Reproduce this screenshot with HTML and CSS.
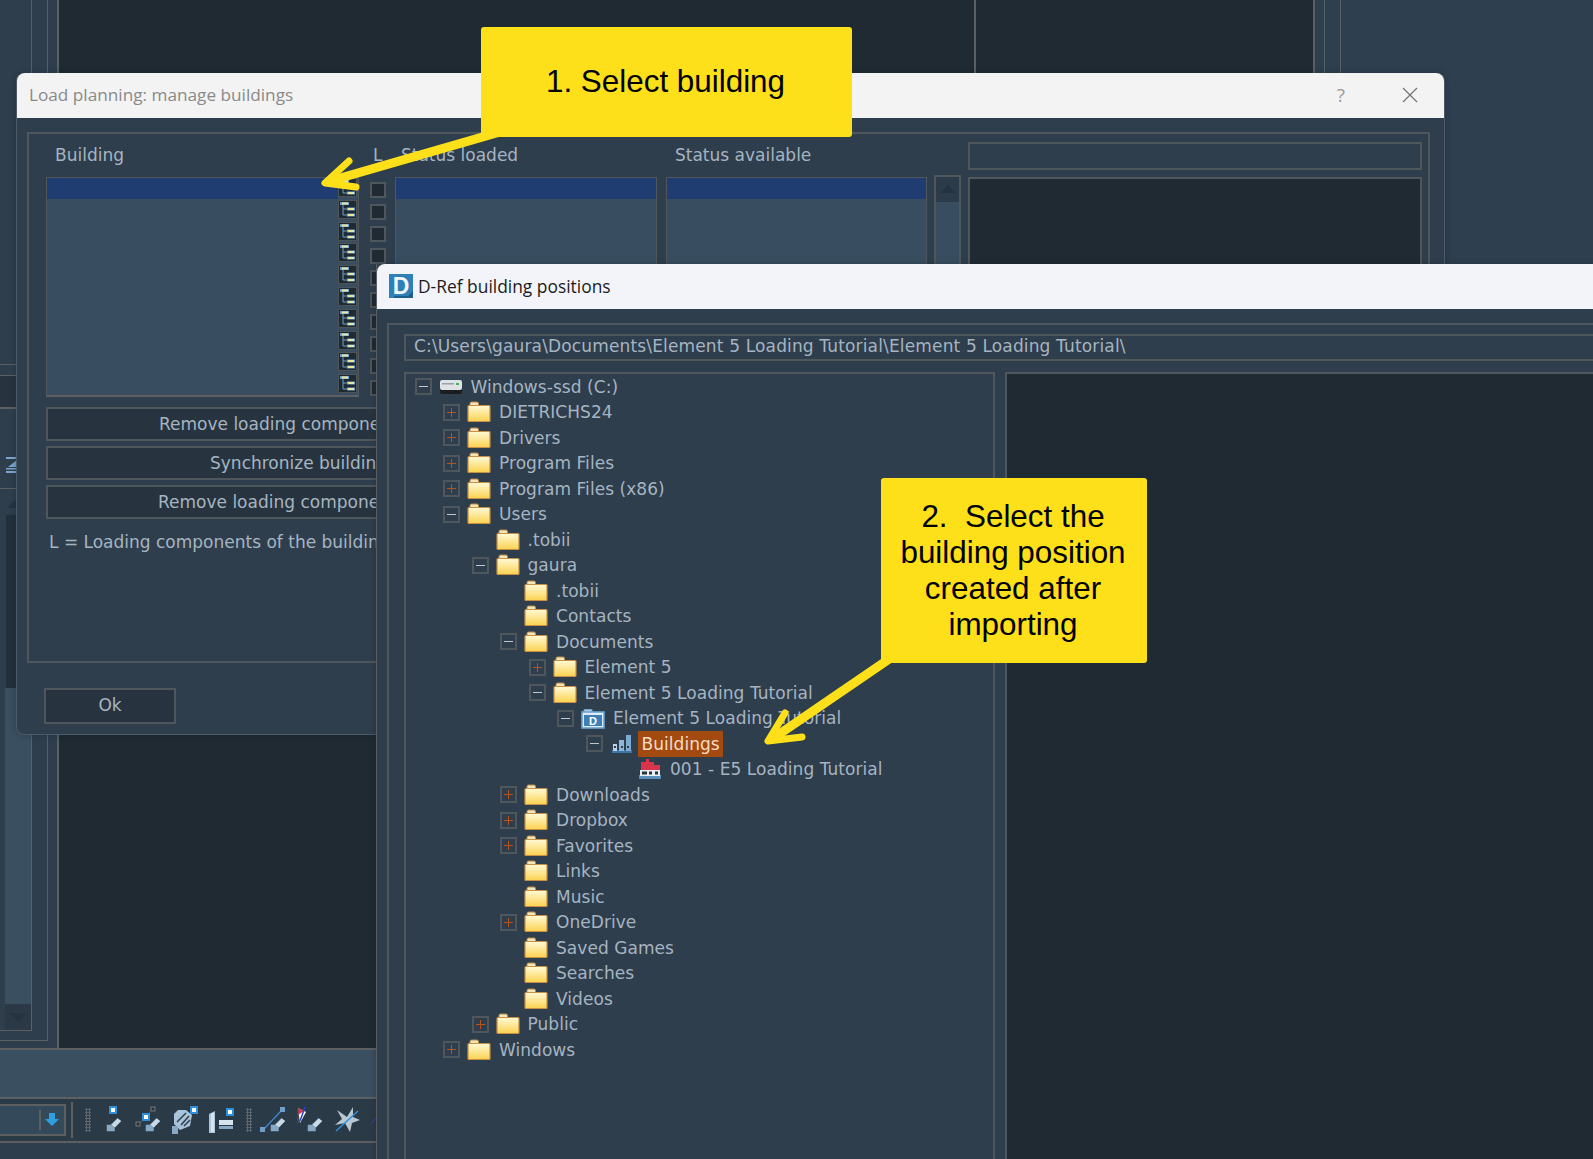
FILE: index.html
```html
<!DOCTYPE html>
<html lang="en">

<head>
    <meta charset="UTF-8">
    <title>Load planning: manage buildings</title>
    <link rel="stylesheet" href="styles.css">
</head>

<body>
    <svg class="defs" width="0" height="0">
        <defs>
            <linearGradient id="folderFill" x1="0" y1="0" x2="0" y2="1">
                <stop offset="0" stop-color="#fffad6" />
                <stop offset="1" stop-color="#fbd250" />
            </linearGradient>
            <symbol id="folder" viewBox="0 0 24 22">
                <path d="M3 4.500V2.500Q3 1 4.500 1H10Q11.500 1 11.500 2.500V4.500Z" fill="#f4e5b8" stroke="#b98a4a" />
                <rect x="1" y="4.500" width="22" height="16" rx="1" fill="url(#folderFill)" stroke="#c98f45" stroke-width="1.200" />
            </symbol>
            <symbol id="drive" viewBox="0 0 24 16">
                <rect x="1" y="4" width="22" height="11" rx="2" fill="#1b1e20" />
                <rect x="1" y="1" width="22" height="10" rx="2" fill="#dfe3e6" />
                <rect x="3" y="4" width="12" height="1.500" fill="#9aa0a5" />
                <rect x="17" y="4" width="3" height="2" fill="#3cb54a" />
            </symbol>
            <symbol id="dfolder" viewBox="0 0 24 22">
                <path d="M3 5V2.500H11V5" fill="#a9cbe6" stroke="#6ea3cf" />
                <rect x="1" y="5" width="22" height="16" fill="#dcebf6" stroke="#6ea3cf" stroke-width="1.600" />
                <rect x="3" y="8" width="18" height="11" fill="#3f7fb8" />
                <text x="12" y="17.500" text-anchor="middle" class="dfolder-letter">D</text>
            </symbol>
            <symbol id="buildings" viewBox="0 0 20 20">
                <rect x="0" y="16" width="20" height="3" fill="#3f76aa" />
                <rect x="1" y="10" width="4" height="7" fill="#b9d2e6" />
                <rect x="7" y="6" width="5" height="11" fill="#8fb6d8" />
                <rect x="14" y="1" width="5" height="16" fill="#7fabd2" />
                <rect x="2" y="12" width="2" height="2" fill="#2e3e4d" />
                <rect x="9" y="12" width="2" height="2" fill="#2e3e4d" />
                <rect x="15" y="12" width="2" height="2" fill="#2e3e4d" />
            </symbol>
            <symbol id="house" viewBox="0 0 24 22">
                <rect x="1" y="17" width="22" height="4" fill="#5d8fbd" />
                <rect x="3" y="4" width="13" height="8" fill="#d8344a" />
                <rect x="8" y="1" width="3" height="4" fill="#d8344a" />
                <rect x="16" y="7" width="6" height="5" fill="#d8344a" />
                <rect x="2" y="12" width="20" height="6" fill="#e8eef3" />
                <rect x="4" y="13.500" width="5" height="3" fill="#27343f" />
                <rect x="11" y="13.500" width="3" height="3" fill="#27343f" />
                <rect x="17" y="13.500" width="3" height="3" fill="#27343f" />
            </symbol>
            <symbol id="treeicon" viewBox="0 0 19 19">
                <rect width="19" height="19" fill="#1f2a33" />
                <rect x="0.500" y="0.500" width="18" height="18" fill="none" stroke="#4e5358" />
                <path d="M5 3V15H9M5 9H9" fill="none" stroke="#6ea3cf" />
                <rect x="2" y="2" width="9" height="3" fill="#6ea3cf" />
                <rect x="4" y="2.500" width="6" height="2" fill="#e9e6a0" />
                <rect x="9" y="7.500" width="8" height="3" fill="#6ea3cf" />
                <rect x="10" y="8" width="6" height="2" fill="#e9e6a0" />
                <rect x="9" y="13.500" width="8" height="3" fill="#6ea3cf" />
                <rect x="10" y="14" width="6" height="2" fill="#e9e6a0" />
            </symbol>
            <symbol id="beam" viewBox="0 0 22 22">
                <path d="M7 12L16 3L21 7L12 16Z" fill="#c9dbe9" />
                <path d="M1 12H7L12 16V21H1Z" fill="#86a9c6" />
                <path d="M7 12L16 3" stroke="#86a9c6" />
            </symbol>
        </defs>
    </svg>

    <div class="desktop">
        <!-- back window -->
        <div class="app">
            <div class="app-main">
                <div class="rail">
                    <div class="rail-mid">
                        <div class="rail-in">
                            <div class="rail-top"></div>
                            <div class="rail-dark"></div>
                            <div class="rail-tool">
                                <svg class="rail-icon" width="11" height="16" viewBox="0 0 11 16">
                                    <path d="M0 0H11V2H0Z" fill="#7ba7cf" />
                                    <path d="M11 3V10H2Z" fill="#7ba7cf" />
                                    <path d="M0 11H11V12.500H0Z" fill="#7ba7cf" />
                                    <path d="M0 14H11V16H0Z" fill="#7ba7cf" />
                                </svg>
                            </div>
                            <div class="rail-scroll">
                                <div class="scroll-up"><span class="tri-up"></span></div>
                                <div class="scroll-thumb"></div>
                                <div class="scroll-track"></div>
                                <div class="scroll-down"><span class="tri-down"></span></div>
                            </div>
                        </div>
                    </div>
                </div>
                <div class="view view-a"></div>
                <div class="view view-b"></div>
                <div class="rail-right">
                    <div class="rail-right-in"></div>
                </div>
            </div>
            <div class="band"></div>
            <div class="toolbar">
                <div class="combo"><span class="combo-bar"></span>
                    <svg width="14" height="14" viewBox="0 0 14 14">
                        <path d="M4 0H10V6H14L7 13L0 6H4Z" fill="#2f9fe0" />
                    </svg>
                </div>
                <span class="tool-sep"></span>
                <span class="grip"></span>
                <svg class="tool" width="18" height="28" viewBox="0 0 18 28"><use href="#beam" x="0" y="8" width="16" height="20" /><rect x="4" y="1" width="6" height="6" fill="#fff" stroke="#2f8fdc" stroke-width="2" /></svg>
                <svg class="tool" width="26" height="28" viewBox="0 0 26 28"><use href="#beam" x="10" y="8" width="16" height="20" /><path d="M4 18L18 3" stroke="#5c6063" /><rect x="1" y="16" width="4" height="4" fill="#27343f" stroke="#777" /><rect x="16" y="1" width="4" height="4" fill="#27343f" stroke="#777" /><rect x="8" y="8" width="6" height="6" fill="#fff" stroke="#2f8fdc" stroke-width="2" /></svg>
                <svg class="tool" width="26" height="28" viewBox="0 0 26 28"><path d="M2 8L6 4L14 4L20 9L18 20L8 24L2 18Z" fill="#a9c3d8" /><path d="M5 16L14 7M9 19L17 10M12 20L18 14" stroke="#2e3e4d" stroke-width="1.500" /><rect x="0" y="20" width="6" height="8" fill="#86a9c6" /><rect x="19" y="1" width="6" height="6" fill="#fff" stroke="#2f8fdc" stroke-width="2" /></svg>
                <svg class="tool" width="26" height="28" viewBox="0 0 26 28"><path d="M0 8L6 5V27H0Z" fill="#a9c6dc" /><rect x="2" y="7" width="3" height="19" fill="#d5e4ef" /><rect x="10" y="14" width="14" height="5" fill="#d5e4ef" /><rect x="10" y="20" width="14" height="3" fill="#86a9c6" /><rect x="18" y="3" width="6" height="6" fill="#fff" stroke="#2f8fdc" stroke-width="2" /></svg>
                <span class="grip grip-b"></span>
                <svg class="tool" width="26" height="28" viewBox="0 0 26 28"><use href="#beam" x="10" y="8" width="16" height="20" /><path d="M3 24L22 4" stroke="#3f86c6" stroke-width="1.500" /><rect x="0" y="21" width="5" height="5" fill="#6f9fc9" /><rect x="20" y="1" width="5" height="5" fill="#6f9fc9" /></svg>
                <svg class="tool" width="26" height="28" viewBox="0 0 26 28"><use href="#beam" x="10" y="8" width="16" height="20" /><path d="M1 2L9 6L3 17Z" fill="#fff" /><path d="M1 2L7 5L1 9Z" fill="#d8344a" /><path d="M8 1L3 15" stroke="#3040d0" stroke-width="1.500" /><path d="M1 2V18" stroke="#555" /></svg>
                <svg class="tool" width="26" height="28" viewBox="0 0 26 28"><path d="M3 4L13 11L19 1L19 11L26 14L18 17L16 26L11 17L1 19L8 13Z" fill="#b9c7d1" /><path d="M2 25L24 5" stroke="#2f8fdc" stroke-width="1.500" /></svg>
                <svg class="tool" width="8" height="28" viewBox="0 0 8 28"><path d="M0 18L8 8" stroke="#3040d0" /></svg>
            </div>
            <div class="app-foot"></div>
        </div>

        <!-- load planning dialog -->
        <div class="dialog dialog-load">
            <div class="dlg-title">
                <span class="dlg-title-text">Load planning: manage buildings</span>
                <span class="dlg-help">?</span>
                <svg class="dlg-close" width="16" height="16" viewBox="0 0 16 16">
                    <path d="M1 1L15 15M15 1L1 15" stroke="#6f6f6f" stroke-width="1.100" />
                </svg>
            </div>
            <div class="load-frame">
                <div class="load-grid">
                    <div class="lbl lbl-building">Building</div>
                    <div class="lbl lbl-l">L</div>
                    <div class="lbl lbl-status">Status loaded</div>
                    <div></div>
                    <div class="lbl lbl-avail">Status available</div>
                    <div></div>
                    <div></div>
                    <div></div>
                    <div class="info-box"></div>

                    <div class="list list-building">
                        <div class="list-names"><div class="list-sel"></div></div>
                        <div class="tree-col">
                            <svg class="tree-icon"><use href="#treeicon" /></svg>
                            <svg class="tree-icon"><use href="#treeicon" /></svg>
                            <svg class="tree-icon"><use href="#treeicon" /></svg>
                            <svg class="tree-icon"><use href="#treeicon" /></svg>
                            <svg class="tree-icon"><use href="#treeicon" /></svg>
                            <svg class="tree-icon"><use href="#treeicon" /></svg>
                            <svg class="tree-icon"><use href="#treeicon" /></svg>
                            <svg class="tree-icon"><use href="#treeicon" /></svg>
                            <svg class="tree-icon"><use href="#treeicon" /></svg>
                            <svg class="tree-icon"><use href="#treeicon" /></svg>
                        </div>
                    </div>
                    <div class="check-col">
                        <span class="check"></span><span class="check"></span><span class="check"></span><span class="check"></span><span class="check"></span>
                        <span class="check"></span><span class="check"></span><span class="check"></span><span class="check"></span><span class="check"></span>
                    </div>
                    <div class="list"><div class="list-sel"></div></div>
                    <div></div>
                    <div class="list"><div class="list-sel"></div></div>
                    <div></div>
                    <div class="scrollbar">
                        <div class="scrollbar-btn"><span class="tri-up"></span></div>
                    </div>
                    <div></div>
                    <div class="dark-box"></div>
                </div>
                <div class="actions">
                    <div class="btn btn-a">Remove loading components</div>
                    <div class="btn btn-b">Synchronize building</div>
                    <div class="btn btn-a2">Remove loading components</div>
                </div>
                <div class="legend">L = Loading components of the building</div>
            </div>
            <div class="btn btn-ok">Ok</div>
        </div>

        <!-- d-ref dialog -->
        <div class="dialog dialog-dref">
            <div class="dlg-title dlg-title-dref">
                <svg class="app-logo" width="24" height="24" viewBox="0 0 24 24">
                    <rect width="24" height="24" fill="#2f7fb8" />
                    <path d="M5 22L19 22L24 17V24H5Z" fill="#1e5f92" />
                    <text x="12" y="20" text-anchor="middle" class="logo-letter">D</text>
                </svg>
                <span class="dref-text">D-Ref building positions</span>
            </div>
            <div class="dref-frame">
                <div class="path-box">C:\Users\gaura\Documents\Element 5 Loading Tutorial\Element 5 Loading Tutorial\</div>
                <div class="dref-panes">
                    <div class="tree">
                        <div class="row lv0"><span class="exp minus"></span><svg class="ico ico-drive"><use href="#drive" /></svg><span>Windows-ssd (C:)</span></div>
                        <div class="row lv1"><span class="exp plus"></span><svg class="ico"><use href="#folder" /></svg><span>DIETRICHS24</span></div>
                        <div class="row lv1"><span class="exp plus"></span><svg class="ico"><use href="#folder" /></svg><span>Drivers</span></div>
                        <div class="row lv1"><span class="exp plus"></span><svg class="ico"><use href="#folder" /></svg><span>Program Files</span></div>
                        <div class="row lv1"><span class="exp plus"></span><svg class="ico"><use href="#folder" /></svg><span>Program Files (x86)</span></div>
                        <div class="row lv1"><span class="exp minus"></span><svg class="ico"><use href="#folder" /></svg><span>Users</span></div>
                        <div class="row lv2"><span class="exp none"></span><svg class="ico"><use href="#folder" /></svg><span>.tobii</span></div>
                        <div class="row lv2"><span class="exp minus"></span><svg class="ico"><use href="#folder" /></svg><span>gaura</span></div>
                        <div class="row lv3"><span class="exp none"></span><svg class="ico"><use href="#folder" /></svg><span>.tobii</span></div>
                        <div class="row lv3"><span class="exp none"></span><svg class="ico"><use href="#folder" /></svg><span>Contacts</span></div>
                        <div class="row lv3"><span class="exp minus"></span><svg class="ico"><use href="#folder" /></svg><span>Documents</span></div>
                        <div class="row lv4"><span class="exp plus"></span><svg class="ico"><use href="#folder" /></svg><span>Element 5</span></div>
                        <div class="row lv4"><span class="exp minus"></span><svg class="ico"><use href="#folder" /></svg><span>Element 5 Loading Tutorial</span></div>
                        <div class="row lv5"><span class="exp minus"></span><svg class="ico"><use href="#dfolder" /></svg><span>Element 5 Loading Tutorial</span></div>
                        <div class="row lv6"><span class="exp minus"></span><svg class="ico ico-bld"><use href="#buildings" /></svg><span class="selected">Buildings</span></div>
                        <div class="row lv7"><span class="exp none"></span><svg class="ico"><use href="#house" /></svg><span>001 - E5 Loading Tutorial</span></div>
                        <div class="row lv3"><span class="exp plus"></span><svg class="ico"><use href="#folder" /></svg><span>Downloads</span></div>
                        <div class="row lv3"><span class="exp plus"></span><svg class="ico"><use href="#folder" /></svg><span>Dropbox</span></div>
                        <div class="row lv3"><span class="exp plus"></span><svg class="ico"><use href="#folder" /></svg><span>Favorites</span></div>
                        <div class="row lv3"><span class="exp none"></span><svg class="ico"><use href="#folder" /></svg><span>Links</span></div>
                        <div class="row lv3"><span class="exp none"></span><svg class="ico"><use href="#folder" /></svg><span>Music</span></div>
                        <div class="row lv3"><span class="exp plus"></span><svg class="ico"><use href="#folder" /></svg><span>OneDrive</span></div>
                        <div class="row lv3"><span class="exp none"></span><svg class="ico"><use href="#folder" /></svg><span>Saved Games</span></div>
                        <div class="row lv3"><span class="exp none"></span><svg class="ico"><use href="#folder" /></svg><span>Searches</span></div>
                        <div class="row lv3"><span class="exp none"></span><svg class="ico"><use href="#folder" /></svg><span>Videos</span></div>
                        <div class="row lv2"><span class="exp plus"></span><svg class="ico"><use href="#folder" /></svg><span>Public</span></div>
                        <div class="row lv1"><span class="exp plus"></span><svg class="ico"><use href="#folder" /></svg><span>Windows</span></div>
                    </div>
                    <div class="dref-dark"></div>
                </div>
            </div>
        </div>

        <!-- annotations -->
        <svg class="arrows" width="1593" height="1159" viewBox="0 0 1593 1159">
            <g fill="none" stroke="#fde01a" stroke-linejoin="round" stroke-linecap="round">
                <path d="M510 129L330 181" stroke-width="9" stroke-linecap="butt" />
                <path d="M349 161L325 183L356 187" stroke-width="7" />
                <path d="M895 655L775 737" stroke-width="9" stroke-linecap="butt" />
                <path d="M785 713L768 741L802 737" stroke-width="7" />
            </g>
        </svg>
        <div class="callout callout-1">1. Select building</div>
        <div class="callout callout-2">2.&nbsp; Select the<br>building position<br>created after<br>importing</div>
    </div>
</body>

</html>
```

FILE: styles.css
```css
* {
    margin: 0;
    padding: 0;
    box-sizing: border-box;
}

body {
    background-color: #2e3e4d;
    font-family: "DejaVu Sans", sans-serif;
    color: #a6b4c1;
}

.defs {
    position: absolute;
}

.dfolder-letter {
    font-family: "Liberation Sans", sans-serif;
    font-size: 11px;
    font-weight: 700;
    fill: #ffffff;
}

.logo-letter {
    font-family: "Liberation Sans", sans-serif;
    font-size: 23px;
    font-weight: 700;
    fill: #f2f6fa;
}

.desktop {
    position: relative;
    width: 1593px;
    height: 1159px;
    overflow: hidden;
}

/* back window */
.app {
    display: flex;
    flex-direction: column;
    height: 1159px;
}

.app-main {
    display: flex;
    height: 1050px;
    border-bottom: 2px solid #5c6063;
}

.rail {
    width: 59px;
    background-color: #2e3e4d;
    border-right: 2px solid #5c6063;
}

.rail-mid {
    width: 48px;
    height: 1041px;
    border-right: 1px solid #5c6063;
    border-bottom: 1px solid #5c6063;
}

.rail-in {
    display: flex;
    flex-direction: column;
    width: 32px;
    height: 1031px;
    border-right: 1px solid #5c6063;
    border-bottom: 1px solid #5c6063;
    background-color: #2e3e4d;
}

.rail-top {
    flex-shrink: 0;
    height: 365px;
    border-bottom: 1px solid #5c6063;
}

.rail-dark {
    flex-shrink: 0;
    height: 34px;
    margin-top: 10px;
    background-color: #27343f;
    border-top: 1px solid #5c6063;
    border-bottom: 2px solid #5c6063;
}

.rail-tool {
    flex-shrink: 0;
    height: 80px;
    padding: 48px 0 0 6px;
    border-bottom: 1px solid #5c6063;
}

.rail-icon {
    display: block;
}

.rail-scroll {
    display: flex;
    flex: 1;
    flex-direction: column;
    padding-left: 5px;
}

.scroll-up {
    height: 26px;
    padding: 11px 0 0 2px;
}

.tri-up {
    display: block;
    width: 0;
    height: 0;
    border-left: 8px solid transparent;
    border-right: 8px solid transparent;
    border-bottom: 8px solid #253240;
}

.tri-down {
    display: block;
    width: 0;
    height: 0;
    margin: 9px auto 0;
    border-left: 9px solid transparent;
    border-right: 9px solid transparent;
    border-top: 9px solid #253240;
}

.scroll-thumb {
    width: 12px;
    height: 173px;
    margin-left: 1px;
    background-color: #22303b;
}

.scroll-track {
    flex: 1;
    background-color: #3a4f60;
}

.scroll-down {
    height: 26px;
    background-color: #2b3946;
}

.view {
    background-color: #1f2a33;
    border-right: 2px solid #5c6063;
}

.view-a {
    width: 917px;
}

.view-b {
    width: 339px;
}

.rail-right {
    flex: 1;
    background-color: #2e3f4f;
}

.rail-right-in {
    width: 17px;
    height: 100%;
    border-left: 1px solid #5c6063;
    border-right: 1px solid #5c6063;
    margin-left: 9px;
}

.band {
    height: 49px;
    background-color: #3a4f60;
    border-bottom: 2px solid #5c6063;
}

.toolbar {
    display: flex;
    align-items: center;
    height: 44px;
    background-color: #2b3a47;
    border-bottom: 2px solid #5c6063;
}

.combo {
    display: flex;
    align-items: center;
    justify-content: flex-end;
    gap: 4px;
    width: 66px;
    height: 32px;
    padding-right: 5px;
    background-color: #34495a;
    border: 2px solid #5c6063;
    border-left: none;
}

.combo-bar {
    width: 2px;
    height: 20px;
    background-color: #5c6063;
}

.tool-sep {
    width: 2px;
    height: 36px;
    margin: 0 12px 0 5px;
    background-color: #5c6063;
}

.grip {
    width: 6px;
    height: 24px;
    margin-right: 15px;
    background-image: radial-gradient(#5f666c 1px, transparent 1.2px);
    background-size: 3px 3px;
}

.grip-b {
    margin-right: 8px;
}

.tool {
    display: block;
    margin-right: 11px;
}

.app-foot {
    flex: 1;
    background-color: #2e3e4d;
}

/* dialogs */
.dialog {
    position: absolute;
    background-color: #2e3e4d;
    box-shadow: 0 0 6px rgba(20, 28, 36, 0.35);
}

.dialog-load {
    left: 16px;
    top: 73px;
    width: 1429px;
    height: 662px;
    border-radius: 8px;
    border: 1px solid #4d5a67;
    border-top: none;
}

.dlg-title {
    display: flex;
    align-items: center;
    height: 45px;
    padding: 0 0 2px 12px;
    background-color: #f3f3f3;
    border-radius: 8px 8px 0 0;
}

.dlg-title-text {
    flex: 1;
    font-family: "Open Sans", sans-serif;
    font-size: 17.200px;
    color: #8a8a8a;
}

.dlg-help {
    margin-right: 57px;
    font-family: "Open Sans", sans-serif;
    font-size: 19px;
    color: #9a9a9a;
}

.dlg-close {
    margin-right: 26px;
}

.load-frame {
    height: 531px;
    margin: 14px 14px 0 10px;
    padding: 8px 7px 0 17px;
    border: 2px solid #4f565c;
}

.load-grid {
    display: grid;
    grid-template-columns: 313px 36px 262px 9px 261px 7px 27px 7px 454px;
    grid-template-rows: 35px 220px;
}

.lbl {
    height: 27px;
    line-height: 27px;
    font-size: 17px;
}

.lbl-building {
    padding-left: 9px;
}

.lbl-l {
    padding-left: 14px;
}

.lbl-status {
    padding-left: 6px;
}

.lbl-avail {
    padding-left: 9px;
}

.info-box {
    height: 28px;
    border: 2px solid #4f565c;
}

.list {
    background-color: #384d5f;
    border: 1px solid #4f565c;
    border-bottom: 2px solid #5c6063;
}

.list-building {
    display: flex;
}

.list-names {
    flex: 1;
}

.list-sel {
    height: 21px;
    background-color: #1f3d70;
}

.tree-col {
    display: flex;
    flex-direction: column;
    width: 20px;
}

.tree-icon {
    display: block;
    flex-shrink: 0;
    width: 19px;
    height: 19px;
    margin-bottom: 2.800px;
}

.check-col {
    display: flex;
    flex-direction: column;
    gap: 6px;
    padding: 5px 0 0 11px;
}

.check {
    display: block;
    width: 16px;
    height: 16px;
    background-color: #1f2a33;
    border: 2px solid #4f565c;
}

.scrollbar {
    height: 222px;
    margin-top: -2px;
    background-color: #384d5f;
    border: 2px solid #4f565c;
}

.scrollbar-btn {
    height: 25px;
    padding: 8px 0 0 4px;
    background-color: #2c3b49;
}

.dark-box {
    background-color: #1f2a33;
    border: 2px solid #4f565c;
}

.actions {
    display: flex;
    flex-direction: column;
    gap: 5px;
    width: 881px;
    margin-top: 10px;
}

.btn {
    height: 34px;
    line-height: 30px;
    font-size: 17px;
    white-space: nowrap;
    background-color: #27343f;
    border: 2px solid #4f565c;
}

.btn-a {
    padding-left: 111px;
}

.btn-b {
    padding-left: 162px;
}

.btn-a2 {
    padding-left: 110px;
}

.legend {
    height: 24px;
    margin-top: 11px;
    padding-left: 3px;
    line-height: 24px;
    font-size: 17px;
    white-space: nowrap;
}

.btn-ok {
    width: 132px;
    height: 36px;
    margin: 25px 0 0 27px;
    line-height: 30px;
    text-align: center;
}

.dialog-dref {
    left: 376px;
    top: 264px;
    width: 1300px;
    height: 1000px;
    border-left: 1px solid #5c6063;
}

.dlg-title-dref {
    padding-left: 12px;
    background-color: #f2f4fa;
    border-radius: 8px 0 0 0;
}

.app-logo {
    display: block;
}

.dref-text {
    margin-left: 5px;
    font-family: "Open Sans", sans-serif;
    font-size: 17.400px;
    color: #1c1c1c;
}

.dref-frame {
    height: 900px;
    margin: 14px 0 0 10px;
    padding: 9px 0 0 15px;
    border: 2px solid #4f565c;
}

.path-box {
    height: 27px;
    padding-left: 8px;
    line-height: 21px;
    font-size: 17px;
    letter-spacing: 0.150px;
    white-space: nowrap;
    border: 2px solid #4f565c;
}

.dref-panes {
    display: flex;
    gap: 10px;
    margin-top: 11px;
    height: 840px;
}

.tree {
    width: 591px;
    border: 2px solid #4f565c;
}

.dref-dark {
    flex: 1;
    background-color: #1f2a33;
    border: 2px solid #4f565c;
}

.row {
    display: flex;
    align-items: center;
    height: 25.500px;
    font-size: 17px;
    letter-spacing: 0.050px;
    white-space: nowrap;
}

.lv0 { padding-left: 8.500px; }
.lv1 { padding-left: 37px; }
.lv2 { padding-left: 65.500px; }
.lv3 { padding-left: 94px; }
.lv4 { padding-left: 122.500px; }
.lv5 { padding-left: 151px; }
.lv6 { padding-left: 179.500px; }
.lv7 { padding-left: 208px; }

.exp {
    position: relative;
    flex-shrink: 0;
    width: 17px;
    height: 17px;
    margin-right: 7px;
    border: 2px solid #4f565c;
}

.exp.none {
    border: none;
}

.exp::before {
    content: "";
    position: absolute;
    left: 2px;
    top: 6px;
    width: 9px;
    height: 1px;
    background-color: #c0c6cb;
}

.exp.none::before {
    display: none;
}

.exp.plus::before {
    background-color: #b8531c;
}

.exp.plus::after {
    content: "";
    position: absolute;
    left: 6px;
    top: 2px;
    width: 1px;
    height: 9px;
    background-color: #b8531c;
}

.ico {
    display: block;
    flex-shrink: 0;
    width: 24px;
    height: 22px;
    margin-right: 8px;
}

.ico-bld {
    width: 24px;
    height: 20px;
}

.selected {
    height: 26px;
    margin-left: -4px;
    padding: 0 3px 0 4px;
    line-height: 26px;
    color: #f5dcc6;
    background-color: #a34a10;
}

/* annotations */
.arrows {
    position: absolute;
    left: 0;
    top: 0;
}

.callout {
    position: absolute;
    display: flex;
    align-items: center;
    justify-content: center;
    padding-right: 2px;
    text-align: center;
    font-family: "Liberation Sans", sans-serif;
    font-size: 31.400px;
    line-height: 36px;
    color: #000000;
    background-color: #fde01a;
    border-radius: 3px;
}

.callout-1 {
    left: 481px;
    top: 27px;
    width: 371px;
    height: 110px;
}

.callout-2 {
    left: 881px;
    top: 478px;
    width: 266px;
    height: 185px;
}
```
